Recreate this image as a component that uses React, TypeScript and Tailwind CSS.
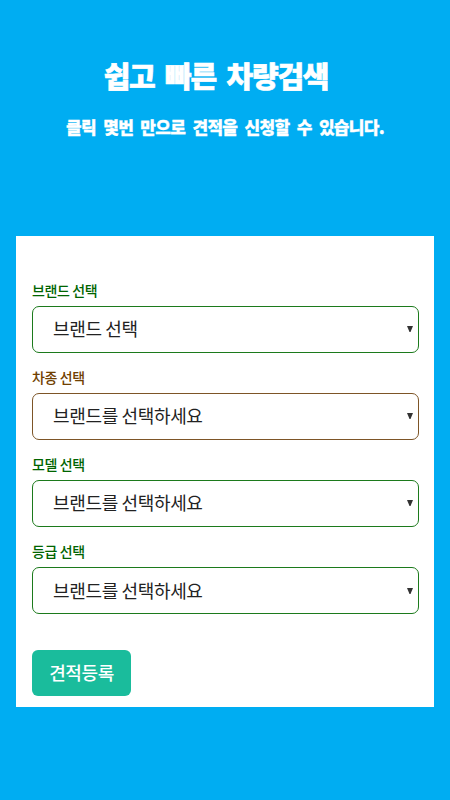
interface Field {
  id: string;
  label: string;
  placeholder: string;
  tone: string;
  border: string;
}

const fields: Field[] = [
  { id: "brand", label: "브랜드 선택", placeholder: "브랜드 선택", tone: "text-[#006400]", border: "border-[#1c7a1c]" },
  { id: "type", label: "차종 선택", placeholder: "브랜드를 선택하세요", tone: "text-[#704000]", border: "border-[#7d5527]" },
  { id: "model", label: "모델 선택", placeholder: "브랜드를 선택하세요", tone: "text-[#006400]", border: "border-[#1c7a1c]" },
  { id: "grade", label: "등급 선택", placeholder: "브랜드를 선택하세요", tone: "text-[#006400]", border: "border-[#1c7a1c]" },
];

function SelectField({ field }: { field: Field }) {
  return (
    <div className="h-[87.1px]">
      <label
        htmlFor={field.id}
        className={`block h-[24px] text-[14px] leading-[16px] font-medium tracking-[-0.4px] whitespace-nowrap ${field.tone}`}
      >
        {field.label}
      </label>
      <button
        id={field.id}
        type="button"
        className={`flex h-[46.5px] w-full items-center justify-between rounded-[7px] border bg-white pr-[5px] pl-[20px] ${field.border}`}
      >
        <span className="pb-[2px] text-[18px] leading-[24px] tracking-[-0.35px] whitespace-nowrap text-[#222]">{field.placeholder}</span>
        <svg viewBox="0 0 6 6" className="h-[6px] w-[6px]" fill="#333">
          <path d="M0 0h6L3.5 6h-1z" />
        </svg>
      </button>
    </div>
  );
}

export default function App() {
  return (
    <div className="h-[800px] w-[450px] overflow-hidden bg-[#00adf2] px-4 font-['Noto_Sans_CJK_KR',sans-serif]">
      <header className="flex h-[236px] flex-col items-center pt-[55px] text-white">
        <h1 className="pr-[18px] text-[29px] leading-[40px] font-black tracking-[-1.2px] whitespace-nowrap [word-spacing:5px] [-webkit-text-stroke:0.6px_white]">
          쉽고 빠른 차량검색
        </h1>
        <p className="mt-[19px] text-[17px] leading-[26px] font-black tracking-[-0.7px] whitespace-nowrap [word-spacing:4.1px] [-webkit-text-stroke:0.3px_white]">
          클릭 몇번 만으로 견적을 신청할 수 있습니다.
        </p>
      </header>
      <main className="h-[470.5px] w-[418px] bg-white pt-[46px] pr-[15px] pl-[16px]">
        {fields.map((f) => (
          <SelectField key={f.id} field={f} />
        ))}
        <button
          type="button"
          className="mt-[20px] h-[46px] w-[99px] rounded-[6px] bg-[#1abc9c] pb-px text-[18px] font-medium tracking-[-0.4px] text-white"
        >
          견적등록
        </button>
      </main>
    </div>
  );
}
